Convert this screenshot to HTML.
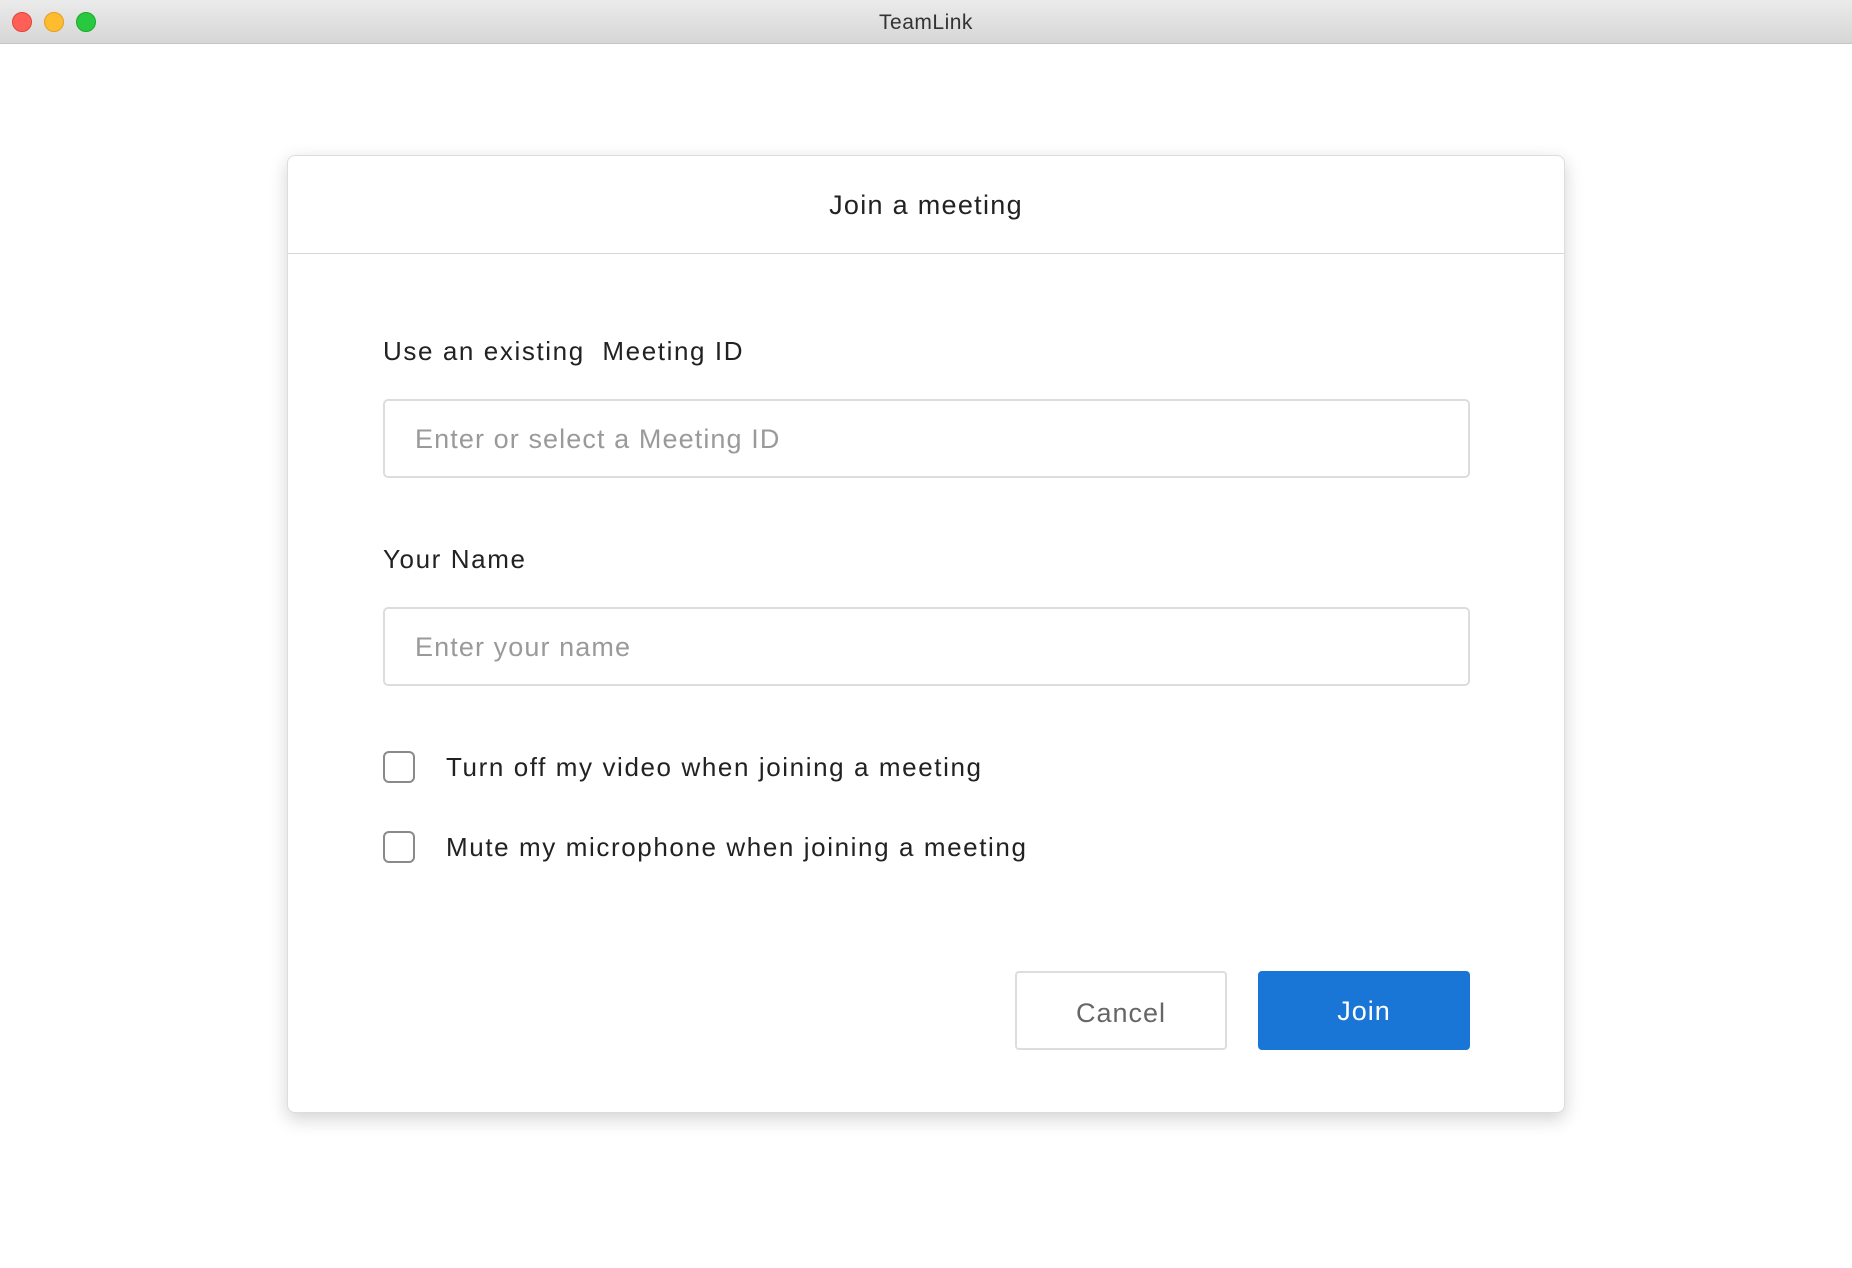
<!DOCTYPE html>
<html><head><meta charset="utf-8"><style>
*{box-sizing:border-box;margin:0;padding:0}
body{width:1852px;height:1268px;background:#fff;font-family:"Liberation Sans",sans-serif;position:relative;overflow:hidden;color:#222}
.tb{position:absolute;left:0;top:0;width:1852px;height:44px;background:linear-gradient(#ebebeb,#d6d6d6);border-bottom:1px solid #c4c4c4}
.dot{position:absolute;top:12px;width:20px;height:20px;border-radius:50%}
.tt{position:absolute;top:0;width:100%;text-align:center;line-height:46px;font-size:21px;color:#333;letter-spacing:.5px}
.dlg{position:absolute;left:287px;top:155px;width:1278px;height:958px;border:1px solid #ddd;border-radius:8px;background:#fff;box-shadow:0 6px 18px rgba(0,0,0,.18)}
.hd{height:98px;border-bottom:1px solid #d8d8d8;text-align:center;line-height:98px;font-size:27px;color:#222;letter-spacing:1.3px}
.a{position:absolute;font-size:26px;letter-spacing:1.6px}
.in{position:absolute;left:95px;width:1087px;height:79px;border:2px solid #ddd;border-radius:5px;font-size:27px;color:#9a9a9a;padding-left:30px;line-height:77px;letter-spacing:1.1px}
.cb{position:absolute;left:95px;width:32px;height:32px;border:2px solid #8a8a8a;border-radius:6px}
.btn{position:absolute;top:815px;height:79px;width:212px;border-radius:4px;text-align:center;line-height:80px;font-size:27px;letter-spacing:1px}
</style></head><body>
<div class="tb">
<div class="dot" style="left:12px;background:#fe5f57;border:1px solid #e0443e"></div>
<div class="dot" style="left:44px;background:#febc2e;border:1px solid #dea123"></div>
<div class="dot" style="left:76px;background:#28c840;border:1px solid #1aab29"></div>
<div class="tt">TeamLink</div>
</div>
<div class="dlg">
<div class="hd">Join a meeting</div>
<div class="a" style="left:95px;top:180px">Use an existing&nbsp; Meeting ID</div>
<div class="in" style="top:243px">Enter or select a Meeting ID</div>
<div class="a" style="left:95px;top:388px">Your Name</div>
<div class="in" style="top:451px">Enter your name</div>
<div class="cb" style="top:595px"></div>
<div class="a" style="left:158px;top:596px">Turn off my video when joining a meeting</div>
<div class="cb" style="top:675px"></div>
<div class="a" style="left:158px;top:676px">Mute my microphone when joining a meeting</div>
<div class="btn" style="left:727px;border:2px solid #ddd;color:#666">Cancel</div>
<div class="btn" style="left:970px;background:#1976d6;color:#fff">Join</div>
</div>
</body></html>
